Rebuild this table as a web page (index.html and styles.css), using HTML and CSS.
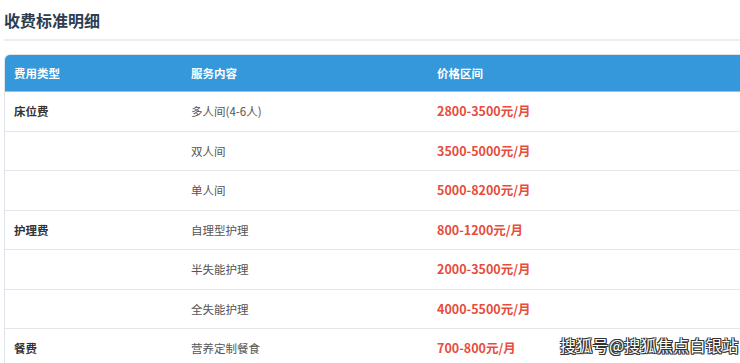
FILE: index.html
```html
<!DOCTYPE html>
<html lang="zh">
<head>
<meta charset="utf-8">
<link rel="stylesheet" href="styles.css">
</head>
<body>
<div class="page">
  <h2 class="title">收费标准明细</h2>
  <div class="divider"></div>
  <div class="table-wrap">
    <table class="fees">
      <colgroup>
        <col class="c1"><col class="c2"><col class="c3">
      </colgroup>
      <thead>
        <tr><th>费用类型</th><th>服务内容</th><th>价格区间</th></tr>
      </thead>
      <tbody>
        <tr><td class="type">床位费</td><td class="svc">多人间(4-6人)</td><td class="price">2800-3500元/月</td></tr>
        <tr><td class="type"></td><td class="svc">双人间</td><td class="price">3500-5000元/月</td></tr>
        <tr><td class="type"></td><td class="svc">单人间</td><td class="price">5000-8200元/月</td></tr>
        <tr><td class="type">护理费</td><td class="svc">自理型护理</td><td class="price">800-1200元/月</td></tr>
        <tr><td class="type"></td><td class="svc">半失能护理</td><td class="price">2000-3500元/月</td></tr>
        <tr><td class="type"></td><td class="svc">全失能护理</td><td class="price">4000-5500元/月</td></tr>
        <tr><td class="type">餐费</td><td class="svc">营养定制餐食</td><td class="price">700-800元/月</td></tr>
      </tbody>
    </table>
  </div>
  <div class="watermark">搜狐号@搜狐焦点白银站</div>
</div>
</body>
</html>
```

FILE: styles.css
```css
html, body {
  margin: 0;
  padding: 0;
  background: #fff;
}
body {
  width: 740px;
  height: 363px;
  overflow: hidden;
  font-family: "Noto Sans CJK SC", "Noto Sans", sans-serif;
}
.page {
  position: relative;
  padding: 8px 0 0 4px;
  width: 736px;
}
.title {
  margin: 0;
  font-size: 16px;
  line-height: 24px;
  font-weight: 700;
  color: #2c3e50;
}
.divider {
  margin-top: 7px;
  height: 2px;
  background: #eeeeee;
}
.table-wrap {
  margin-top: 13px;
  border: 1px solid #dfe4ea;
  border-right: none;
  border-bottom: none;
  border-radius: 6px 0 0 0;
  overflow: hidden;
}
.fees {
  width: 100%;
  border-collapse: collapse;
  table-layout: fixed;
}
.c1 { width: 177px; }
.c2 { width: 246px; }
.fees th {
  height: 36px;
  padding: 0 9px;
  background: #3498db;
  color: #fff;
  font-size: 11.5px;
  font-weight: 700;
  text-align: left;
  border-bottom: 1px solid #8ec3ea;
}
.fees td {
  padding: 10px 9px;
  line-height: 18.5px;
  border-bottom: 1px solid #e6e6e6;
  vertical-align: middle;
}
.type {
  font-size: 11.5px;
  font-weight: 700;
  color: #333;
}
.svc {
  font-size: 11.5px;
  color: #555;
}
.price {
  font-size: 12.5px;
  font-weight: 700;
  color: #e74c3c;
}
.watermark {
  position: absolute;
  left: 560px;
  top: 334px;
  font-size: 16px;
  line-height: 22px;
  color: #fff;
  letter-spacing: 0.3px;
  text-shadow: 1px 1px 0 #333, -1px -1px 0 #333, 1px -1px 0 #333, -1px 1px 0 #333, 0 1px 0 #333, 1px 0 0 #333;
}
```
